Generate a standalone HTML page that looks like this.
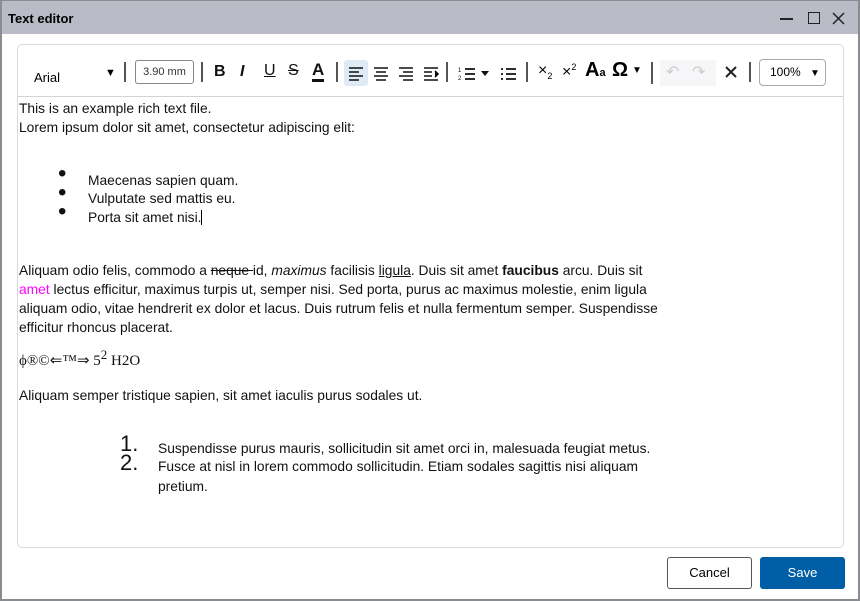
<!DOCTYPE html>
<html><head><style>
*{margin:0;padding:0;box-sizing:border-box}
body{width:860px;height:601px;background:#fff;font-family:"Liberation Sans",sans-serif;position:relative;overflow:hidden}
.win{position:absolute;left:0;top:0;width:860px;height:601px;background:#fff}
.bd{position:absolute;background:#8a8c92}
.title{position:absolute;left:0;top:0;width:860px;height:34px;background:#b9bcc6}
.title b{position:absolute;left:8px;top:11px;font-size:13px}
.panel{position:absolute;left:17px;top:44px;width:827px;height:504px;border:1px solid #d8dae0;border-radius:5px}
.tb{position:absolute;left:0;top:0;width:825px;height:52px;border-bottom:1px solid #d0d3da}
.t{position:absolute;font-size:13.8px;color:#111;white-space:nowrap;line-height:18px}
.i{position:absolute;font-size:16px;font-weight:bold;color:#111}
.sep{position:absolute;top:17px;width:2px;height:20px;background:#555}
</style></head><body>
<div class="win">
<div class="title"><b>Text editor</b>
<span style="position:absolute;left:780px;top:18px;width:13px;height:1.5px;background:#222"></span>
<span style="position:absolute;left:808px;top:12px;width:12px;height:12px;border:1.5px solid #222"></span>
<svg style="position:absolute;left:832px;top:12px" width="13" height="13" stroke="#222" stroke-width="1.5"><path d="M1 1l11 11M12 1L1 12"/></svg>
</div>
<div class="panel">
<div class="tb">
<span style="position:absolute;left:16px;top:25px;font-size:13px">Arial</span>
<span style="position:absolute;left:87px;top:22px;font-size:11px">▼</span>
<div class="sep" style="left:106px"></div>
<span style="position:absolute;left:117px;top:15px;width:59px;height:24px;border:1px solid #888;border-radius:3px;font-size:11px;line-height:22px;text-align:center;color:#333">3.90 mm</span>
<div class="sep" style="left:183px"></div>
<span class="i" style="left:196px;top:18px">B</span>
<span class="i" style="left:222px;top:18px;font-style:italic">I</span>
<span class="i" style="left:246px;top:17px;text-decoration:underline;font-weight:normal">U</span>
<span class="i" style="left:270px;top:17px;text-decoration:line-through;font-weight:normal">S</span>
<span class="i" style="left:294px;top:16px;font-size:17px;border-bottom:3px solid #111;line-height:18px">A</span>
<div class="sep" style="left:318px"></div>
<span style="position:absolute;left:326px;top:15px;width:24px;height:26px;background:#deebf7;border-radius:3px"></span>
<svg style="position:absolute;left:330px;top:20px" width="100" height="16" stroke="#111" stroke-width="1.6">
<path d="M1 3h14M1 7h10M1 11h14M1 15h10"/>
<path d="M26 3h14M28 7h10M26 11h14M28 15h10"/>
<path d="M51 3h14M55 7h10M51 11h14M55 15h10"/>
<path d="M76 3h14M76 7h8M76 11h8M76 15h14M87 6l3 3-3 3"/>
</svg>
<div class="sep" style="left:428px"></div>
<svg style="position:absolute;left:440px;top:20px" width="60" height="16" stroke="#111" stroke-width="1.8">
<path d="M7 4h10M7 9h10M7 14h10"/><text x="0" y="7" font-size="6" stroke="none" fill="#111">1</text><text x="0" y="15" font-size="6" stroke="none" fill="#111">2</text>
<path d="M23 6h8l-4 5z" fill="#111" stroke="none"/>
<path d="M48 4h10M48 9h10M48 14h10M43 4h2M43 9h2M43 14h2"/>
</svg>
<div class="sep" style="left:508px"></div>
<span style="position:absolute;left:520px;top:17px;font-size:16px">×<sub style="font-size:9px">2</sub></span>
<span style="position:absolute;left:544px;top:17px;font-size:16px">×<sup style="font-size:9px">2</sup></span>
<span style="position:absolute;left:567px;top:14px;font-size:20px;font-weight:bold">A<span style="font-size:11px">a</span></span>
<span style="position:absolute;left:594px;top:14px;font-size:20px;font-weight:bold">Ω</span>
<span style="position:absolute;left:614px;top:20px;font-size:10px">▼</span>
<div class="sep" style="left:633px;height:22px"></div>
<span style="position:absolute;left:642px;top:15px;width:56px;height:26px;background:#f6f6f8"></span>
<span style="position:absolute;left:648px;top:17px;font-size:16px;color:#ccc">↶</span>
<span style="position:absolute;left:674px;top:17px;font-size:16px;color:#ccc">↷</span>
<svg style="position:absolute;left:706px;top:20px" width="14" height="14" stroke="#222" stroke-width="2"><path d="M2 2l10 10M12 2L2 12"/></svg>
<div class="sep" style="left:731px"></div>
<span style="position:absolute;left:741px;top:14px;width:67px;height:27px;border:1px solid #aaa;border-radius:4px;font-size:12px;line-height:25px;padding-left:10px">100% <span style="font-size:10px;margin-left:6px">▼</span></span>
</div>
</div>
<div class="t" style="left:19px;top:100px">This is an example rich text file.</div>
<div class="t" style="left:19px;top:119px">Lorem ipsum dolor sit amet, consectetur adipiscing elit:</div>
<div class="t" style="left:58px;top:164px;font-size:24px;line-height:19px">•<br>•<br>•</div>
<div class="t" style="left:88px;top:172px">Maecenas sapien quam.</div>
<div class="t" style="left:88px;top:190px">Vulputate sed mattis eu.</div>
<div class="t" style="left:88px;top:209px">Porta sit amet nisi. <span style="border-left:1.5px solid #000"></span></div>
<div class="t" style="left:19px;top:262px">Aliquam odio felis, commodo a <s>neque </s>id, <i>maximus</i> facilisis <u>ligula</u>. Duis sit amet <b>faucibus</b> arcu. Duis sit</div>
<div class="t" style="left:19px;top:281px"><span style="color:#f0f">amet</span> lectus efficitur, maximus turpis ut, semper nisi. Sed porta, purus ac maximus molestie, enim ligula</div>
<div class="t" style="left:19px;top:300px">aliquam odio, vitae hendrerit ex dolor et lacus. Duis rutrum felis et nulla fermentum semper. Suspendisse</div>
<div class="t" style="left:19px;top:319px">efficitur rhoncus placerat.</div>
<div class="t" style="left:19px;top:346px;font-family:'Liberation Serif',serif;font-size:15px">ϕ®©⇐™⇒ 5<sup style="font-size:13px">2</sup> H2O</div>
<div class="t" style="left:19px;top:387px">Aliquam semper tristique sapien, sit amet iaculis purus sodales ut.</div>
<div class="t" style="left:120px;top:434px;font-size:22px;line-height:19px">1.<br>2.</div>
<div class="t" style="left:158px;top:440px">Suspendisse purus mauris, sollicitudin sit amet orci in, malesuada feugiat metus.</div>
<div class="t" style="left:158px;top:458px">Fusce at nisl in lorem commodo sollicitudin. Etiam sodales sagittis nisi aliquam</div>
<div class="t" style="left:158px;top:478px">pretium.</div>
<div style="position:absolute;left:667px;top:557px;width:85px;height:32px;border:1px solid #555;border-radius:3px;font-size:13px;text-align:center;line-height:30px">Cancel</div>
<div style="position:absolute;left:760px;top:557px;width:85px;height:32px;background:#005ea6;border-radius:3px;color:#fff;font-size:13px;text-align:center;line-height:32px">Save</div>
<div class="bd" style="left:0;top:0;width:2px;height:601px"></div>
<div class="bd" style="right:0;top:0;width:2px;height:601px"></div>
<div class="bd" style="left:0;bottom:0;width:860px;height:2px"></div>
<div class="bd" style="left:0;top:0;width:860px;height:1px"></div>
</div>
</body></html>
